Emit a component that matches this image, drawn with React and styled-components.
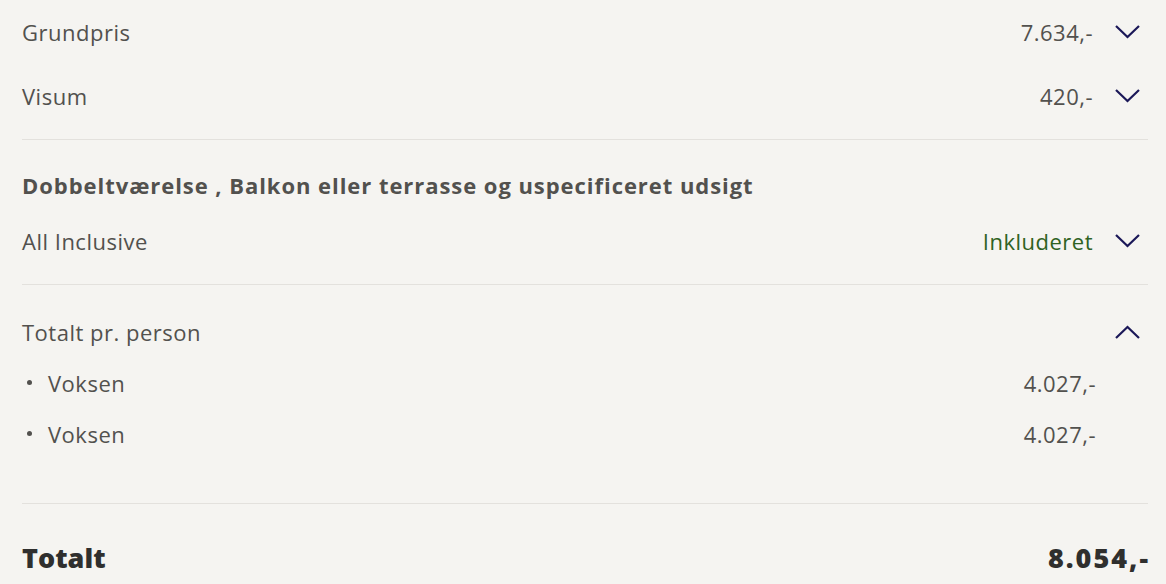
import React from 'react';
import styled, { createGlobalStyle } from 'styled-components';

const GlobalStyle = createGlobalStyle`
  html, body {
    margin: 0;
    padding: 0;
    background: #f5f4f1;
  }
  body {
    font-family: "Open Sans", Lato, sans-serif;
    color: #545350;
  }
`

const Page = styled.div`
  padding: 0 18px 0 22px;
  background: #f5f4f1;
  min-height: 584px;
  box-sizing: border-box;
`

const Section = styled.div`
  padding-top: ${p => p.$top || 0}px;
  padding-bottom: ${p => p.$bottom || 0}px;
  border-bottom: ${p => (p.$last ? 'none' : '1px solid #e3e1dd')};
`

const Row = styled.div`
  display: flex;
  align-items: center;
  height: ${p => p.$h || 64}px;
  margin-top: ${p => p.$mt || 0}px;
  font-size: 22px;
  letter-spacing: 0.5px;
`

const Label = styled.span`
  flex: 1;
  color: #52514e;
`

const Value = styled.span`
  color: ${p => (p.$green ? '#2f6222' : '#52514e')};
`

const ChevronBox = styled.span`
  width: 25px;
  margin: 0 8px 0 22px;
  display: flex;
  align-items: center;
  color: #1b1858;
`

const Heading = styled.div`
  margin-top: 29px;
  line-height: 32px;
  font-size: 22px;
  font-weight: 700;
  letter-spacing: 0.95px;
  color: #52514e;
`

const SubRow = styled.div`
  display: flex;
  align-items: center;
  height: 51px;
  font-size: 22px;
  letter-spacing: 0.5px;
  padding-right: 52px;

  &::before {
    content: '';
    width: 5px;
    height: 5px;
    border-radius: 50%;
    background: #52514e;
    margin: 0 16px 0 5px;
  }
`

const TotalRow = styled.div`
  display: flex;
  align-items: center;
  justify-content: space-between;
  margin-top: 36px;
  line-height: 36px;
  font-size: 27px;
  font-weight: 800;
  color: #2f2f2e;
`

const TotalAmount = styled.span`
  letter-spacing: 2px;
  margin-right: -2px;
`

function Chevron({ up }) {
  return (
    <ChevronBox>
      <svg width="25" height="14" viewBox="0 0 25 14" fill="none">
        <polyline
          points={up ? '1,13 12.5,2 24,13' : '1,1 12.5,12 24,1'}
          stroke="currentColor"
          strokeWidth="2.2"
        />
      </svg>
    </ChevronBox>
  )
}

export default function App() {
  return (
    <>
      <GlobalStyle />
      <Page>
        <Section $bottom={11}>
          <Row>
            <Label>Grundpris</Label>
            <Value>7.634,-</Value>
            <Chevron />
          </Row>
          <Row>
            <Label>Visum</Label>
            <Value>420,-</Value>
            <Chevron />
          </Row>
        </Section>

        <Section $bottom={11}>
          <Heading>Dobbeltværelse , Balkon eller terrasse og uspecificeret udsigt</Heading>
          <Row $mt={8}>
            <Label>All Inclusive</Label>
            <Value $green>Inkluderet</Value>
            <Chevron />
          </Row>
        </Section>

        <Section $top={22} $bottom={44}>
          <Row $h={50}>
            <Label>Totalt pr. person</Label>
            <Chevron up />
          </Row>
          <SubRow>
            <Label>Voksen</Label>
            <Value>4.027,-</Value>
          </SubRow>
          <SubRow>
            <Label>Voksen</Label>
            <Value>4.027,-</Value>
          </SubRow>
        </Section>

        <Section $last>
          <TotalRow>
            <span>Totalt</span>
            <TotalAmount>8.054,-</TotalAmount>
          </TotalRow>
        </Section>
      </Page>
    </>
  );
}
